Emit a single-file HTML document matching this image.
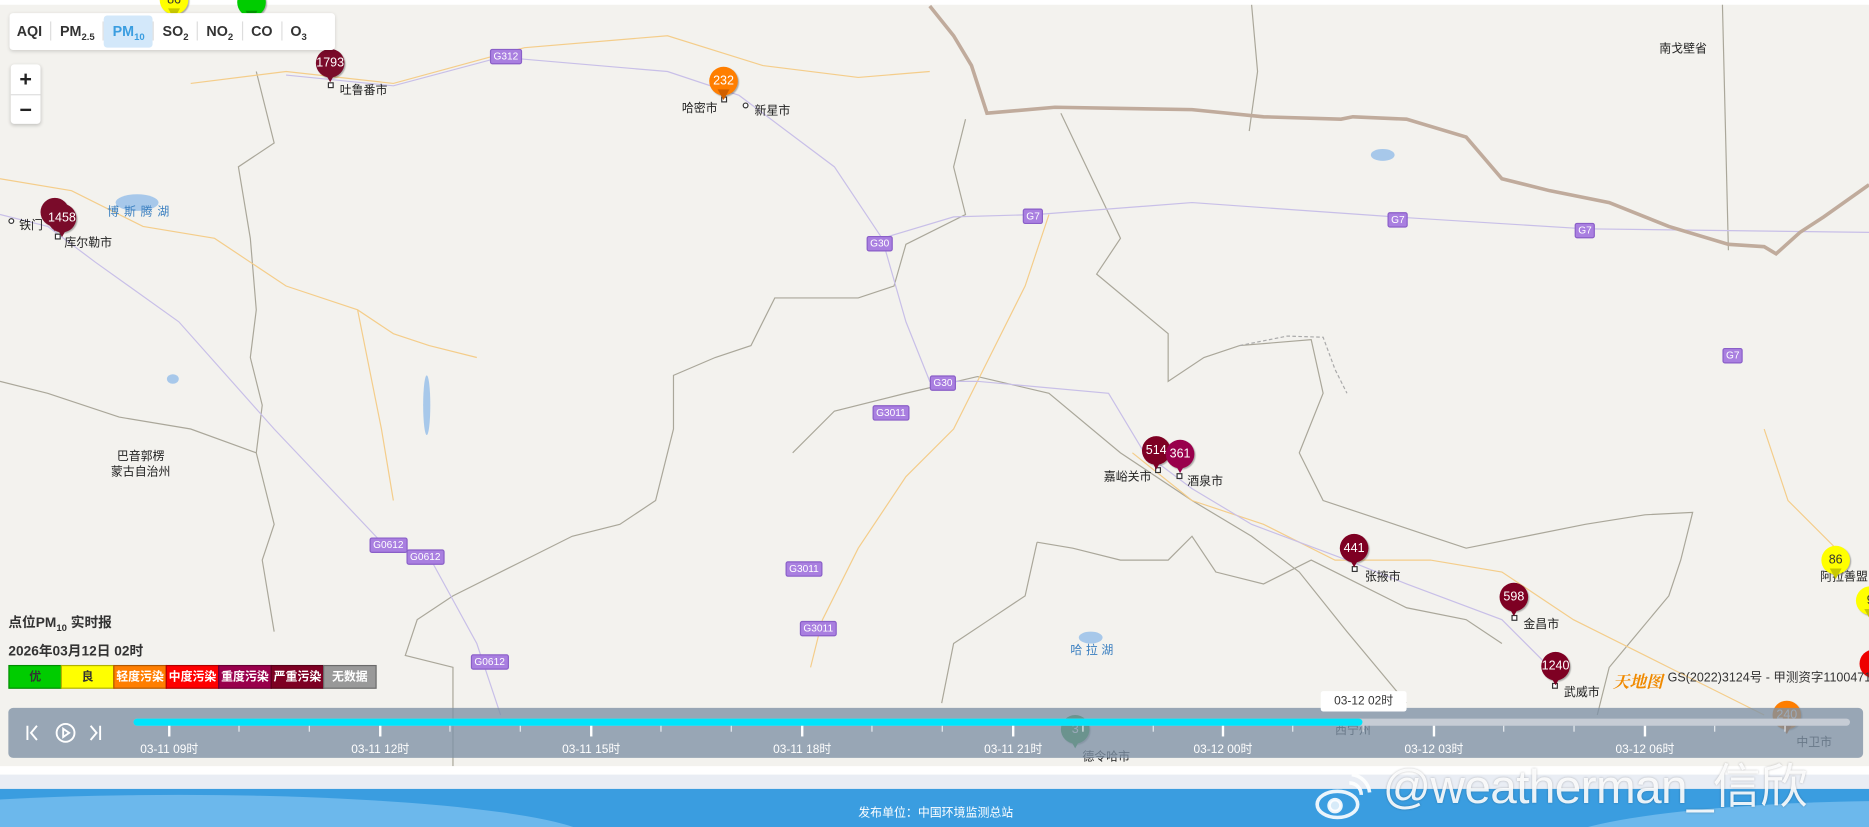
<!DOCTYPE html>
<html><head><meta charset="utf-8"><style>
*{margin:0;padding:0;box-sizing:border-box}
html,body{width:1869px;height:827px;overflow:hidden;background:#fff}
#s{position:absolute;left:0;top:0;width:1568px;height:694px;transform:scale(1.192,1.1917);transform-origin:0 0;font-family:"Liberation Sans","Noto Sans CJK SC",sans-serif;overflow:hidden}
.a{position:absolute}
.mk{position:absolute;width:24px;height:24px;border-radius:50%;color:#fff;font-size:10.5px;text-align:center;line-height:24px;box-shadow:1px 1px 1px rgba(0,0,0,.3)}
.mk:after{content:"";position:absolute;left:7px;top:19px;border-left:5px solid transparent;border-right:5px solid transparent;border-top:9px solid;border-top-color:inherit}
.dot{position:absolute;width:5px;height:5px;border:1px solid #333;background:#fff}
.lb{position:absolute;font-size:10px;color:#222;white-space:nowrap}
.sh{position:absolute;background:#a97fe0;color:#fff;font-size:8.5px;padding:0 2px;border-radius:2px;line-height:11px;border:1px solid #8a5fc8}
.tk{position:absolute;top:609px;width:1px;height:5px;background:#e8ecf0}
.tM{position:absolute;top:609px;width:2px;height:9px;background:#fff}
.tl{position:absolute;top:620px;font-size:10px;color:#fff;white-space:nowrap;transform:translateX(-50%)}
.btn{display:inline-block;padding:0 7px;line-height:30px;font-size:12px;font-weight:bold;color:#333;vertical-align:top}
.sep{display:inline-block;width:1px;height:16px;background:#ddd;margin-top:7px;vertical-align:top}
.lg{display:inline-block;width:45px;height:20px;line-height:20px;text-align:center;font-size:10px;font-weight:bold;color:#fff;border:1px solid rgba(0,0,0,.3);margin-right:-1px}
</style></head><body><div id="s">
<div class="a" style="left:0;top:0;width:1568px;height:643px;background:#f3f2ee"></div>
<div class="a" style="left:0;top:0;width:1568px;height:4px;background:#fff"></div>
<svg class="a" style="left:0;top:0" width="1568" height="643" fill="none">
<g stroke="#aaa79a" stroke-width="1">
<path d="M1050 4 L1055 60 L1048 110"/>
<path d="M1445 4 L1450 210"/>
<path d="M890 95 L940 200 L920 230 L980 280 L980 320 L1010 300 L1040 290 L1100 285 L1110 330 L1090 380 L1110 420 L1140 430 L1170 440 L1200 450 L1230 460 L1280 450 L1330 440 L1380 432 L1420 430 L1410 470 L1400 500 L1350 560 L1340 600"/>
<path d="M810 100 L800 140 L810 180 L760 205 L750 240 L720 250 L650 250 L630 290 L600 300 L565 315 L565 360 L550 420 L520 440 L480 450 L440 470 L380 500 L350 520 L340 550 L380 560 L380 643"/>
<path d="M665 380 L700 345 L760 330 L820 316 L880 330 L940 380 L1000 420 L1050 450 L1090 480 L1130 530 L1180 590"/>
<path d="M870 455 L900 460 L940 470 L980 470 L1000 450 L1020 480 L1060 490 L1100 470 L1140 490 L1180 510 L1230 520 L1260 540"/>
<path d="M870 455 L860 500 L830 520 L800 540 L790 590"/>
<path d="M215 60 L230 120 L200 140 L210 200 L215 260 L210 300 L220 340 L215 380 L230 440 L220 470 L230 530"/>
<path d="M0 320 L40 330 L100 350 L160 360 L215 380"/>
</g>
<g stroke="#f4cd8a" stroke-width="1">
<path d="M0 150 L60 160 L120 190 L180 200 L240 240 L300 260 L330 280 L360 290 L400 300"/>
<path d="M160 70 L240 60 L330 70 L440 40 L560 30 L640 55 L720 65 L780 60"/>
<path d="M880 180 L860 240 L830 300 L800 360 L760 400 L720 460 L690 520 L680 560"/>
<path d="M950 380 L1000 420 L1060 440 L1120 470 L1200 470 L1260 480 L1320 520 L1400 560 L1480 600"/>
<path d="M1480 360 L1500 420 L1540 460"/>
<path d="M300 260 L320 360 L330 420"/>
</g>
<g stroke="#c8bfe8" stroke-width="1">
<path d="M240 63 L330 72 L420 48 L560 60 L620 80 L700 140 L740 200 L760 270 L780 320 L820 320 L930 330 L960 380 L1000 410 L1050 440 L1130 470 L1180 490 L1260 520 L1300 560"/>
<path d="M740 200 L800 182 L870 180 L1000 170 L1170 182 L1330 192 L1568 195"/>
<path d="M0 180 L40 190 L80 220 L150 270 L230 360 L320 455 L360 467 L400 540 L420 600"/>
</g>
<path d="M780 5 L800 30 L815 55 L828 95 L885 90 L1000 92 L1060 98 L1125 100 L1135 98 L1180 100 L1230 115 L1260 150 L1300 160 L1350 170 L1400 190 L1450 205 L1480 207 L1490 213 L1510 195 L1530 182 L1568 155" stroke="#c0ab9c" stroke-width="3"/>
<path d="M1040 290 L1080 282 L1110 283 L1120 310 L1130 330" stroke="#aaa" stroke-dasharray="3 2"/>
<g fill="#a7c8ea"><ellipse cx="115" cy="170" rx="18" ry="7"/><ellipse cx="1160" cy="130" rx="10" ry="5"/><ellipse cx="358" cy="340" rx="3" ry="25"/><ellipse cx="915" cy="535" rx="10" ry="5"/><ellipse cx="145" cy="318" rx="5" ry="4"/></g>
</svg>
<div class="sh" style="left:411px;top:41px">G312</div>
<div class="sh" style="left:858px;top:175px">G7</div>
<div class="sh" style="left:1164px;top:178px">G7</div>
<div class="sh" style="left:1321px;top:187px">G7</div>
<div class="sh" style="left:1445px;top:292px">G7</div>
<div class="sh" style="left:727px;top:198px">G30</div>
<div class="sh" style="left:780px;top:315px">G30</div>
<div class="sh" style="left:732px;top:340px">G3011</div>
<div class="sh" style="left:659px;top:471px">G3011</div>
<div class="sh" style="left:671px;top:521px">G3011</div>
<div class="sh" style="left:310px;top:451px">G0612</div>
<div class="sh" style="left:341px;top:461px">G0612</div>
<div class="sh" style="left:395px;top:549px">G0612</div>
<div class="lb" style="left:1392px;top:32px">南戈壁省</div>
<div class="lb" style="left:90px;top:169px;color:#3a7fc0;letter-spacing:4px">博斯腾湖</div>
<div class="lb" style="left:98px;top:374px">巴音郭楞</div>
<div class="lb" style="left:93px;top:387px">蒙古自治州</div>
<div class="lb" style="left:898px;top:537px;color:#3a7fc0;letter-spacing:3px">哈拉湖</div>
<div class="dot" style="left:275px;top:69px"></div><div class="lb" style="left:285px;top:67px">吐鲁番市</div>
<div class="dot" style="left:605px;top:81px"></div><div class="lb" style="left:572px;top:82px">哈密市</div>
<div class="dot" style="left:623px;top:86px;border-radius:50%"></div><div class="lb" style="left:633px;top:84px">新星市</div>
<div class="dot" style="left:7px;top:183px;border-radius:50%"></div><div class="lb" style="left:16px;top:180px">铁门</div>
<div class="dot" style="left:46px;top:196px"></div><div class="lb" style="left:54px;top:195px">库尔勒市</div>
<div class="dot" style="left:969px;top:392px"></div><div class="lb" style="left:926px;top:391px">嘉峪关市</div>
<div class="dot" style="left:987px;top:397px"></div><div class="lb" style="left:996px;top:395px">酒泉市</div>
<div class="dot" style="left:1134px;top:475px"></div><div class="lb" style="left:1145px;top:475px">张掖市</div>
<div class="dot" style="left:1268px;top:516px"></div><div class="lb" style="left:1278px;top:515px">金昌市</div>
<div class="dot" style="left:1302px;top:573px"></div><div class="lb" style="left:1312px;top:572px">武威市</div>
<div class="lb" style="left:1527px;top:475px">阿拉善盟</div>
<div class="lb" style="left:1120px;top:604px">西宁州</div>
<div class="lb" style="left:1507px;top:614px">中卫市</div>
<div class="lb" style="left:908px;top:626px">德令哈市</div>
<div class="mk" style="left:134px;top:-12px;background:#ff0;border-color:#c8c800;color:#333">86</div>
<div class="mk" style="left:199px;top:-10px;background:#0c0;border-color:#090"></div>
<div class="mk" style="left:265px;top:41px;background:#7a0b2a;border-color:#7a0b2a">1793</div>
<div class="mk" style="left:595px;top:56px;background:#ff7e00;border-color:#d06000">232</div>
<div class="mk" style="left:34px;top:166px;background:#7a0b2a;border-color:#7a0b2a"></div>
<div class="mk" style="left:40px;top:171px;background:#7a0b2a;border-color:#7a0b2a">1458</div>
<div class="mk" style="left:958px;top:366px;background:#7e0023;border-color:#7e0023">514</div>
<div class="mk" style="left:978px;top:369px;background:#99004c;border-color:#99004c">361</div>
<div class="mk" style="left:1124px;top:448px;background:#7e0023;border-color:#7e0023">441</div>
<div class="mk" style="left:1258px;top:489px;background:#7e0023;border-color:#7e0023">598</div>
<div class="mk" style="left:1293px;top:547px;background:#7e0023;border-color:#7e0023">1240</div>
<div class="mk" style="left:1528px;top:458px;background:#ff0;border-color:#c8c800;color:#333">86</div>
<div class="mk" style="left:1557px;top:492px;background:#ff0;border-color:#c8c800;color:#333">9</div>
<div class="mk" style="left:1560px;top:545px;background:#e00;border-color:#e00"></div>
<div class="mk" style="left:890px;top:600px;background:#2a9a3c;border-color:#2a9a3c">3</div>
<div class="mk" style="left:1487px;top:588px;background:#ff7e00;border-color:#d06000">240</div>
<div class="a" style="left:1353px;top:562px;color:#f08a00;font-size:14px;font-weight:bold;font-style:italic;font-family:'Noto Serif CJK SC',serif;white-space:nowrap">天地图</div>
<div class="a" style="left:1399px;top:561px;font-size:10.5px;color:#333;white-space:nowrap">GS(2022)3124号 - 甲测资字1100471</div>
<div class="a" style="left:8px;top:11px;width:273px;height:31px;background:#fff;border-radius:3px;box-shadow:0 1px 3px rgba(0,0,0,.15);padding:0 0 0 1px;white-space:nowrap">
<span class="btn" style="padding:0 7px 0 5px">AQI</span><span class="sep"></span><span class="btn">PM<sub style="font-size:8px">2.5</sub></span><span class="sep"></span><span class="btn" style="background:#d3e8fa;color:#3a9de0;border-radius:3px;margin-top:2px;line-height:27px;height:27px">PM<sub style="font-size:8px">10</sub></span><span class="sep"></span><span class="btn">SO<sub style="font-size:8px">2</sub></span><span class="sep"></span><span class="btn">NO<sub style="font-size:8px">2</sub></span><span class="sep"></span><span class="btn">CO</span><span class="sep"></span><span class="btn">O<sub style="font-size:8px">3</sub></span></div>
<div class="a" style="left:9px;top:54px;width:25px;height:50px;background:#fff;border-radius:3px;box-shadow:0 1px 3px rgba(0,0,0,.2);font-size:18px;font-weight:bold;text-align:center;line-height:25px;color:#222">+<br><span style="display:block;border-top:1px solid #ddd">−</span></div>
<div class="a" style="left:7px;top:514px;font-size:11.5px;font-weight:bold;color:#333">点位PM<sub style="font-size:8px">10</sub> 实时报</div>
<div class="a" style="left:7px;top:538px;font-size:11.5px;font-weight:bold;color:#333">2026年03月12日 02时</div>
<div class="a" style="left:7px;top:558px;white-space:nowrap;font-size:0"><span class="lg" style="background:#0c0;color:#333">优</span><span class="lg" style="background:#ff0;color:#333">良</span><span class="lg" style="background:#ff7e00">轻度污染</span><span class="lg" style="background:#f00">中度污染</span><span class="lg" style="background:#99004c">重度污染</span><span class="lg" style="background:#7e0023">严重污染</span><span class="lg" style="background:#999">无数据</span></div>
<div class="a" style="left:7px;top:594px;width:1556px;height:42px;background:rgba(125,145,165,.78);border-radius:4px"></div>
<svg class="a" style="left:18px;top:605px" width="75" height="20" fill="none" stroke="#fff" stroke-width="1.6"><path d="M5 4 V16 M13 4 L8 10 L13 16"/><circle cx="37" cy="10" r="7.5"/><path d="M35 6.5 L40 10 L35 13.5 Z"/><path d="M58 4 L63 10 L58 16 M66 4 V16"/></svg>
<div class="a" style="left:112px;top:603px;width:1440px;height:6px;background:#c6ccd5;border-radius:3px"></div>
<div class="a" style="left:112px;top:603px;width:1031px;height:6px;background:#00e4fb;border-radius:3px"></div>
<div class="tM" style="left:141px"></div><div class="tM" style="left:318px"></div><div class="tM" style="left:495px"></div><div class="tM" style="left:672px"></div><div class="tM" style="left:849px"></div><div class="tM" style="left:1025px"></div><div class="tM" style="left:1202px"></div><div class="tM" style="left:1379px"></div>
<div class="tk" style="left:200px"></div><div class="tk" style="left:259px"></div><div class="tk" style="left:377px"></div><div class="tk" style="left:436px"></div><div class="tk" style="left:554px"></div><div class="tk" style="left:613px"></div><div class="tk" style="left:731px"></div><div class="tk" style="left:790px"></div><div class="tk" style="left:908px"></div><div class="tk" style="left:967px"></div><div class="tk" style="left:1084px"></div><div class="tk" style="left:1143px"></div><div class="tk" style="left:1261px"></div><div class="tk" style="left:1320px"></div><div class="tk" style="left:1438px"></div><div class="tk" style="left:1497px"></div>
<div class="tl" style="left:142px">03-11 09时</div><div class="tl" style="left:319px">03-11 12时</div><div class="tl" style="left:496px">03-11 15时</div><div class="tl" style="left:673px">03-11 18时</div><div class="tl" style="left:850px">03-11 21时</div><div class="tl" style="left:1026px">03-12 00时</div><div class="tl" style="left:1203px">03-12 03时</div><div class="tl" style="left:1380px">03-12 06时</div>
<div class="a" style="left:1108px;top:580px;width:72px;height:17px;background:#fff;font-size:10px;line-height:17px;text-align:center;color:#333;border-radius:2px">03-12 02时</div>
<div class="a" style="left:0;top:643px;width:1568px;height:7px;background:#fff"></div>
<div class="a" style="left:0;top:650px;width:1568px;height:12px;background:#e9edf4"></div>
<div class="a" style="left:0;top:662px;width:1568px;height:32px;background:#3a9de0;overflow:hidden"><div class="a" style="left:-200px;top:5px;width:700px;height:80px;border-radius:50%;background:#6cb8ec"></div><div class="a" style="left:1300px;top:10px;width:600px;height:80px;border-radius:50%;background:#6cb8ec"></div></div>
<div class="a" style="left:0;top:673px;width:1568px;text-align:center;font-size:10px;color:#fff;padding-left:2px">发布单位：中国环境监测总站</div>
<svg class="a" style="left:1098px;top:645px" width="60" height="45" fill="none" stroke="rgba(255,255,255,.9)" stroke-width="3"><ellipse cx="24" cy="30" rx="17" ry="11"/><circle cx="22" cy="31" r="5" fill="rgba(255,255,255,.8)"/><path d="M34 12 a10 10 0 0 1 10 10 M36 5 a17 17 0 0 1 15 15"/></svg>
<div class="a" style="left:1160px;top:636px;font-size:40px;line-height:50px;height:58px;color:rgba(255,255,255,.9);white-space:nowrap;text-shadow:0 0 2px rgba(0,0,0,.25);font-family:'Liberation Sans','Noto Sans CJK SC',sans-serif;letter-spacing:-0.5px">@weatherman_信欣</div>
</div></body></html>
